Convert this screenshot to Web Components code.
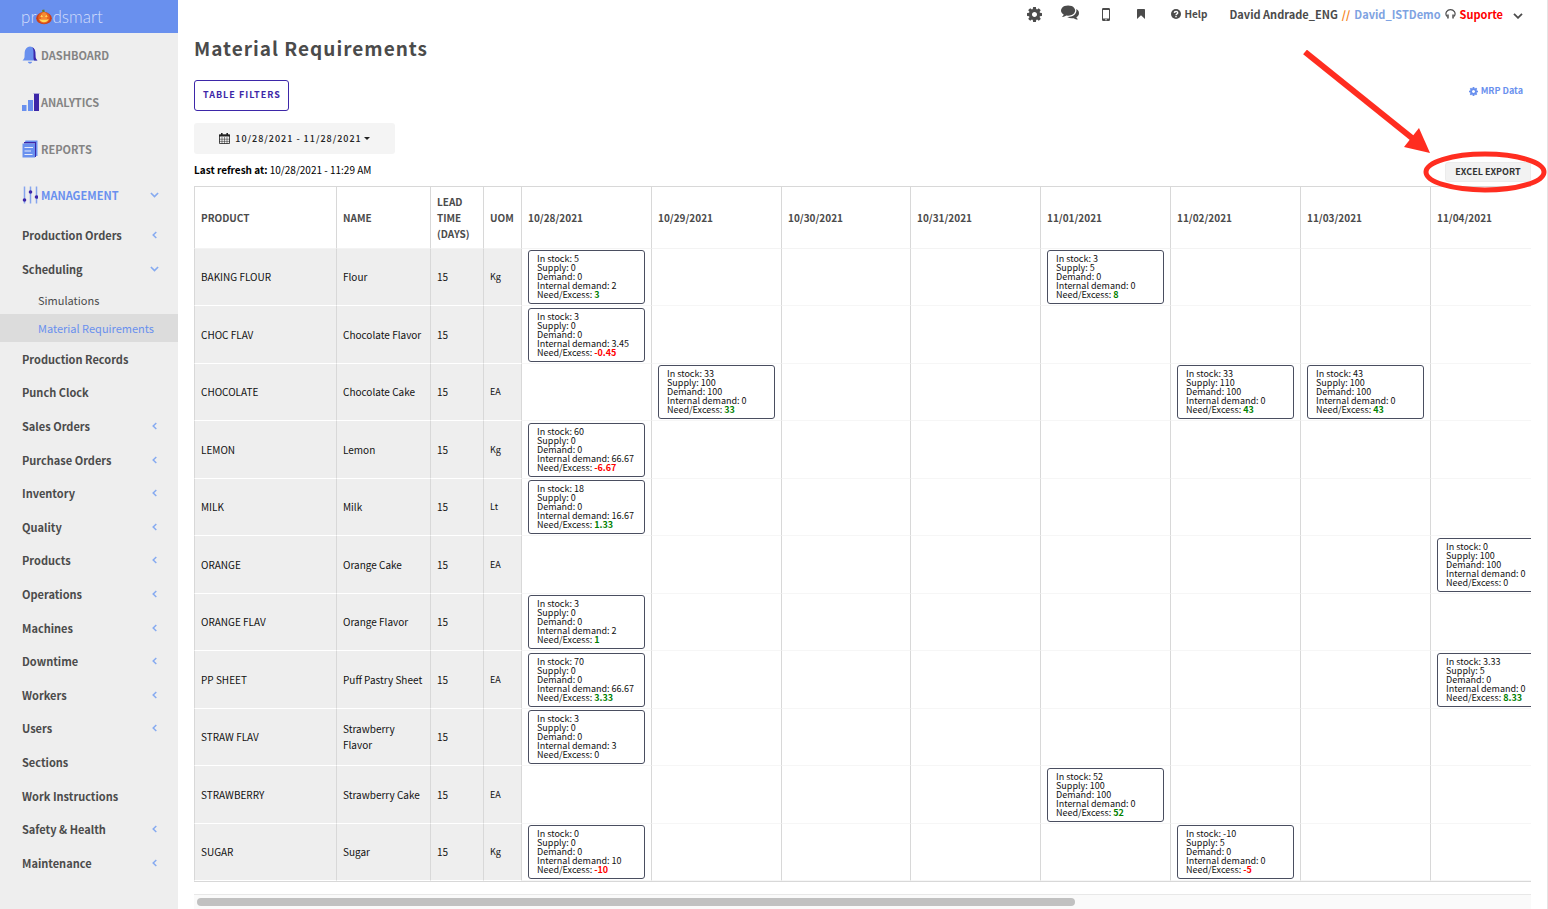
<!DOCTYPE html>
<html lang="en">
<head>
<meta charset="utf-8">
<title>Material Requirements</title>
<style>
  body { margin: 0; background: #fff; font-family: "Noto Sans CJK SC", "Noto Sans", sans-serif; font-size: 10px; line-height: 16px; color: #111; }
</style>
</head>
<body>
<app-shell>
  <side-bar slot="nav"></side-bar>
  <top-bar slot="top"></top-bar>
  <mrp-page></mrp-page>
</app-shell>

<script>
const define = (name, html, setup) => {
  const tpl = document.createElement('template');
  tpl.innerHTML = html;
  customElements.define(name, class extends HTMLElement {
    constructor() {
      super();
      this.attachShadow({ mode: 'open' }).append(tpl.content.cloneNode(true));
    }
    connectedCallback() { if (setup) setup(this, this.shadowRoot); }
  });
};

/* ---------- icons ---------- */
const ICONS = {
  bell: ['0 0 16 18', '<path fill="#6990ee" d="M8 .5c-3 .3-5 2.500-5.300 5.500L2.500 11C2.400 12.500 1.600 13.300.5 14.500h15c-1.100-1.200-1.900-2-2-3.500l-.2-5C13 3 11 .8 8 .5z"/><path fill="#3d27a8" d="M10.200 1.300c2 .9 3 2.700 3.100 4.700l.2 5c.1 1.500.9 2.300 2 3.500h-3.300c-.7-1.200-.7-2.300-.7-3.800V6c0-2-.4-3.500-1.300-4.700z"/><path fill="#6990ee" d="M5.800 15.700h4.400c-.3 1.200-1.100 1.800-2.200 1.800s-1.900-.6-2.200-1.800z"/>'],
  bars: ['0 0 18 18', '<path fill="#6990ee" d="M0 12h4.500v6H0zM6 7h5v11H6z"/><path fill="#3d27a8" d="M12 1h5v17h-5z"/><path fill="#a9a4d8" d="M11.500 0h6v1h-6z"/>'],
  doc: ['0 0 16 18', '<path fill="#6990ee" d="M3.500.5h12V16h-1.500V2H3z"/><path fill="#3d27a8" d="M2 2h12v15h-1V3.500H2z"/><path fill="#6990ee" d="M.5 3.500H13v14H.5z"/><path stroke="#e6ecfb" stroke-width="1.200" d="M2.500 7.500h8.500M2.500 11h6.500M2.500 14.500h8"/>'],
  sliders: ['0 0 16 18', '<path stroke="#86a5ee" stroke-width="1.500" d="M2.500.5v17M8.500.5v17M14.500.5v17"/><g fill="#3d27a8"><circle cx="2.500" cy="14" r="1.800"/><circle cx="8.500" cy="6" r="1.800"/><circle cx="14.500" cy="11" r="1.800"/></g>'],
  down: ['0 0 10 6', '<path fill="none" stroke="currentColor" stroke-width="1.800" d="M1 .8l4 4 4-4"/>'],
  left: ['0 0 5 8', '<path fill="none" stroke="currentColor" stroke-width="1.500" d="M4.300 1L1.200 4l3.100 3"/>'],
  cog: ['0 128 1536 1536', '<path fill="currentColor" d="M1024 896q0-106-75-181t-181-75-181 75-75 181 75 181 181 75 181-75 75-181zm512-109v222q0 12-8 23t-20 13l-185 28q-19 54-39 91 35 50 107 138 10 12 10 25t-9 23q-27 37-99 108t-94 71q-12 0-26-9l-138-108q-44 23-91 38-16 136-29 186-7 28-36 28h-222q-14 0-24.500-8.500t-11.500-21.500l-28-184q-49-16-90-37l-141 107q-10 9-25 9-14 0-25-11-126-114-165-168-7-10-7-23 0-12 8-23 15-21 51-66.500t54-70.500q-27-50-41-99l-183-27q-13-2-21-12.500t-8-23.500v-222q0-12 8-23t19-13l186-28q14-46 39-92-40-57-107-138-10-12-10-24 0-10 9-23 26-36 98.500-107.500t94.500-71.500q13 0 26 10l138 107q44-23 91-38 16-136 29-186 7-28 36-28h222q14 0 24.500 8.500t11.500 21.500l28 184q49 16 90 37l142-107q9-9 24-9 13 0 25 10 129 119 165 170 7 8 7 22 0 12-8 23-15 21-51 66.500t-54 70.500q26 50 41 98l183 28q13 2 21 12.500t8 23.500z" fill-rule="evenodd"/>'],
  chat: ['0 256 1792 1408', '<path fill="currentColor" d="M1408 768q0 139-94 257t-256.500 186.500-353.500 68.500q-86 0-176-16-124 88-278 128-36 9-86 16h-3q-11 0-20.500-8t-11.500-21q-1-3-1-6.500t.5-6.500 2-6l2.500-5 3.500-5.500 4-5 4.500-5 4-4.500q5-6 23-25t26-29.500 22.500-29 25-38.500 20.500-44q-124-72-195-177t-71-224q0-139 94-257t256.500-186.500 353.500-68.500 353.500 68.500 256.500 186.500 94 257zm384 256q0 120-71 224.500t-195 176.500q10 24 20.500 44t25 38.500 22.500 29 26 29.500 23 25q1 1 4 4.500t4.500 5 4 5 3.500 5.500l2.500 5 2 6 .5 6.500-1 6.500q-3 14-13 22t-22 7q-50-7-86-16-154-40-278-128-90 16-176 16-271 0-472-132 58 4 88 4 161 0 309-45t264-129q125-92 192-212t67-254q0-77-23-152 129 71 204 178t75 230z"/>'],
  phone: ['0 0 8 13', '<path fill="currentColor" fill-rule="evenodd" d="M1.300 0h5.400Q8 0 8 1.300v10.400Q8 13 6.700 13H1.300Q0 13 0 11.700V1.300Q0 0 1.300 0zM1 2v8.500h6V2zM4 11.100a.7.7 0 100 1.400.7.7 0 000-1.400z"/>'],
  bookmark: ['0 0 8 10', '<path fill="currentColor" d="M.8 0h6.400Q8 0 8 .8V10L4 6.300 0 10V.8Q0 0 .8 0z"/>'],
  help: ['0 0 10 10', '<circle cx="5" cy="5" r="5" fill="currentColor"/><path fill="none" stroke="#fff" stroke-width="1.400" d="M3.300 3.900c.1-2 3.500-1.900 3.400 0C6.700 5 5 4.900 5 6.300"/><path fill="#fff" d="M4.300 7h1.400v1.300H4.300z"/>'],
  headset: ['0 0 11 10', '<path fill="none" stroke="currentColor" stroke-width="1.200" d="M1.900 7.500C-.7 3.500 2.500.7 5.500.7s6.200 2.800 3.600 6.800"/><path fill="currentColor" d="M2.200 5.500h1.500v4H2.200zM7.300 5.500h1.500v4H7.300z"/>'],
  calendar: ['0 0 11 11', '<path fill="none" stroke="currentColor" stroke-width=".8" d="M.5 2h10v8.500H.5z"/><path fill="currentColor" d="M0 1.600h11v1.900H0zM2 0h1.600v3H2zM7.400 0H9v3H7.400z"/><path stroke="currentColor" stroke-width=".5" d="M3 4v7M5.500 4v7M8 4v7M0 6.200h11M0 8.400h11"/>'],
  caret: ['0 0 6 3', '<path fill="currentColor" d="M0 0h6L3 3z"/>'],
  pumpkin: ['0 0 17 17', '<path fill="#6b7a2a" d="M7 4l-.6-3 2.400-.5.7 3.500z"/><ellipse cx="8.500" cy="9.800" rx="8.300" ry="6.500" fill="#c9401b"/><ellipse cx="8.500" cy="9.300" rx="6.200" ry="6" fill="#e8641f"/><ellipse cx="8.500" cy="8.800" rx="3.300" ry="5.300" fill="#f58a35"/><path fill="#ffd75a" d="M4.500 8.500l1.500-2.300 1.500 2.300zM9.500 8.500L11 6.200l1.500 2.300zM3.500 10.500q5 2 10 0-1.500 3.500-5 3.500t-5-3.500z"/>']
};
customElements.define('ui-icon', class extends HTMLElement {
  constructor() { super(); this.attachShadow({ mode: 'open' }); }
  connectedCallback() {
    const [box, art] = ICONS[this.getAttribute('name')];
    const [w, h] = [this.getAttribute('w'), this.getAttribute('h')];
    this.shadowRoot.innerHTML = `<style>:host{display:inline-block;flex:none;line-height:0}svg{display:block}</style>
      <svg width="${w}" height="${h}" viewBox="${box}" aria-hidden="true">${art}</svg>`;
  }
});

/* ---------- shell ---------- */
define('app-shell', `<style>
  :host { display: grid; grid-template-columns: 178px minmax(0, 1fr); min-height: 100vh; }
  .body { border-right: 1px solid #e4e4e4; padding: 0 16px; }
</style>
<slot name="nav"></slot>
<div class="body"><slot name="top"></slot><main><slot></slot></main></div>`);

/* ---------- sidebar ---------- */
define('nav-item', `<style>
  :host { display: block; height: 34px; }
  a { display: flex; align-items: center; height: 100%; box-sizing: border-box; padding: 0 19px 0 22px;
      color: #4b4b4b; font-weight: 700; font-size: 11px; text-decoration: none; white-space: nowrap; }
  .label { flex: 1; }
  .arrow { display: flex; justify-content: center; width: 10px; }
  ui-icon { color: #86aaf0; }
  .lead { display: none; margin-right: 3px; width: 16px; }
  :host([kind=main]) { height: 47px; }
  :host([kind=main]) a { color: #848484; padding-bottom: 3px; }
  :host([kind=main]) .lead { display: flex; }
  :host([kind=main][current]) { height: 44px; }
  :host([kind=main][current]) a, :host([kind=sub][current]) a { color: #6990ee; }
  :host([kind=sub]) { height: 28px; }
  :host([kind=sub]) a { padding-left: 38px; padding-right: 0; font-weight: 400; }
  :host([kind=sub][current]) { background: #dcdcdc; }
</style>
<a href="#"><span class="lead"></span><span class="label"><slot></slot></span><span class="arrow"></span></a>`, (el, root) => {
  const icon = el.getAttribute('icon'), arrow = el.getAttribute('arrow');
  if (icon) root.querySelector('.lead').innerHTML = `<ui-icon name="${icon}" w="${icon === 'bars' ? 18 : 16}" h="18"></ui-icon>`;
  if (arrow) root.querySelector('.arrow').innerHTML = arrow === 'left'
    ? '<ui-icon name="left" w="5" h="8"></ui-icon>' : '<ui-icon name="down" w="9" h="6"></ui-icon>';
});

define('side-bar', `<style>
  :host { display: block; background: #eee; }
  .logo { display: flex; align-items: center; height: 33px; padding-left: 21px; box-sizing: border-box; background: #6990ee;
          color: #d3defb; font: 300 17px/20px Lato, sans-serif; text-decoration: none; }
</style>
<a class="logo" href="#" aria-label="prodsmart"><span>pr</span><ui-icon name="pumpkin" w="16" h="16"></ui-icon><span>dsmart</span></a>
<nav>
  <nav-item kind="main" icon="bell">DASHBOARD</nav-item>
  <nav-item kind="main" icon="bars">ANALYTICS</nav-item>
  <nav-item kind="main" icon="doc">REPORTS</nav-item>
  <nav-item kind="main" icon="sliders" arrow="down" current>MANAGEMENT</nav-item>
  <nav-item arrow="left">Production Orders</nav-item>
  <nav-item arrow="down">Scheduling</nav-item>
  <nav-item kind="sub">Simulations</nav-item>
  <nav-item kind="sub" current>Material Requirements</nav-item>
  <side-list></side-list>
</nav>`);

define('side-list', `<style>
  :host { display: block; }
  nav-item:nth-of-type(5n+1), nav-item:nth-of-type(5n+4) { height: 33px; }
</style>
<nav-item>Production Records</nav-item>
<nav-item>Punch Clock</nav-item>
<nav-item arrow="left">Sales Orders</nav-item>
<nav-item arrow="left">Purchase Orders</nav-item>
<nav-item arrow="left">Inventory</nav-item>
<nav-item arrow="left">Quality</nav-item>
<nav-item arrow="left">Products</nav-item>
<nav-item arrow="left">Operations</nav-item>
<nav-item arrow="left">Machines</nav-item>
<nav-item arrow="left">Downtime</nav-item>
<nav-item arrow="left">Workers</nav-item>
<nav-item arrow="left">Users</nav-item>
<nav-item>Sections</nav-item>
<nav-item>Work Instructions</nav-item>
<nav-item arrow="left">Safety &amp; Health</nav-item>
<nav-item arrow="left">Maintenance</nav-item>`);

/* ---------- top bar ---------- */
define('top-bar', `<style>
  :host { display: flex; justify-content: flex-end; align-items: center; height: 28px; padding-right: 8px; color: #4b4b4b; font-weight: 700; white-space: nowrap; }
  .tools { display: flex; align-items: center; margin-right: 22px; }
  a { color: inherit; text-decoration: none; display: flex; align-items: center; }
  .chat { margin: 0 23px 4px 19px; }
  .mark { margin: 0 26px 0 27px; }
  .help { gap: 3px; }
  .user { gap: 4px; font-size: 11px; }
  .org { color: #7ea3e2; } .sep { color: #f58220; } .sup { color: #f00; }
  button { all: unset; display: flex; margin: 3px 0 0 10px; cursor: pointer; }
</style>
<div class="tools">
  <a href="#" aria-label="Settings"><ui-icon name="cog" w="15" h="15"></ui-icon></a>
  <a href="#" aria-label="Messages" class="chat"><ui-icon name="chat" w="18" h="15"></ui-icon></a>
  <a href="#" aria-label="Mobile"><ui-icon name="phone" w="8" h="13"></ui-icon></a>
  <a href="#" aria-label="Bookmarks" class="mark"><ui-icon name="bookmark" w="8" h="10"></ui-icon></a>
  <a href="#" class="help"><ui-icon name="help" w="10" h="10"></ui-icon>Help</a>
</div>
<a href="#" class="user"><span>David Andrade_ENG</span><span class="sep">//</span><span class="org">David_ISTDemo</span><ui-icon name="headset" w="11" h="10"></ui-icon><span class="sup">Suporte</span></a>
<button aria-label="Account menu"><ui-icon name="down" w="10" h="6"></ui-icon></button>`);

/* ---------- stock card ---------- */
define('stock-card', `<style>
  :host { display: block; box-sizing: border-box; height: 54px; border: 1px solid #4a4e60; border-radius: 3px; background: #fff;
          padding: 3px 0 0 8px; font-size: 9px; line-height: 9px; color: #111; white-space: nowrap; }
  div { height: 9px; }
  .plus { color: #008000; font-weight: 700; } .minus { color: #f00; font-weight: 700; }
</style>`, (el, root) => {
  const v = el.getAttribute('values').split(' ');
  const n = +v[4], cls = n > 0 ? 'plus' : n < 0 ? 'minus' : '';
  ['In stock', 'Supply', 'Demand', 'Internal demand', 'Need/Excess'].forEach((label, i) => {
    const row = document.createElement('div');
    row.innerHTML = i === 4 && cls ? `${label}: <span class="${cls}">${v[i]}</span>` : `${label}: ${v[i]}`;
    root.append(row);
  });
});

/* ---------- requirements table ---------- */
const DATES = ['10/28/2021', '10/29/2021', '10/30/2021', '10/31/2021', '11/01/2021', '11/02/2021', '11/03/2021', '11/04/2021'];
const ROWS = [
  ['BAKING FLOUR', 'Flour', 'Kg', { 0: '5 0 0 2 3', 4: '3 5 0 0 8' }],
  ['CHOC FLAV', 'Chocolate Flavor', '', { 0: '3 0 0 3.45 -0.45' }],
  ['CHOCOLATE', 'Chocolate Cake', 'EA', { 1: '33 100 100 0 33', 5: '33 110 100 0 43', 6: '43 100 100 0 43' }],
  ['LEMON', 'Lemon', 'Kg', { 0: '60 0 0 66.67 -6.67' }],
  ['MILK', 'Milk', 'Lt', { 0: '18 0 0 16.67 1.33' }],
  ['ORANGE', 'Orange Cake', 'EA', { 7: '0 100 100 0 0' }],
  ['ORANGE FLAV', 'Orange Flavor', '', { 0: '3 0 0 2 1' }],
  ['PP SHEET', 'Puff Pastry Sheet', 'EA', { 0: '70 0 0 66.67 3.33', 7: '3.33 5 0 0 8.33' }],
  ['STRAW FLAV', 'Strawberry Flavor', '', { 0: '3 0 0 3 0' }],
  ['STRAWBERRY', 'Strawberry Cake', 'EA', { 4: '52 100 100 0 52' }],
  ['SUGAR', 'Sugar', 'Kg', { 0: '0 0 0 10 -10', 5: '-10 5 0 0 -5' }]
];
define('mrp-table', `<style>
  :host { display: block; }
  .view { overflow: hidden; }
  table { table-layout: fixed; width: 1367px; border-collapse: separate; border-spacing: 0; }
  .c1 { width: 143px; } .c2 { width: 94px; } .c3 { width: 53px; } .c4 { width: 38px; } .cd { width: 130px; } .cd:nth-child(7) { width: 129px; }
  th, td { box-sizing: border-box; text-align: left; padding: 0 6px; border-right: 1px solid #d8d8d8; }
  th:first-child, td:first-child { border-left: 1px solid #d8d8d8; }
  th { height: 63px; color: #4b4b4b; border-top: 1px solid #d8d8d8; border-bottom: 1px solid #f3f3f3; }
  td { height: 57px; border-bottom: 1px solid #f6f6f6; }
  tr:nth-child(even) td { height: 58px; }
  td.fix { background: #eee; border-bottom-color: #fff; }
  td.uom { font-size: 9px; }
  td.day { vertical-align: bottom; padding-bottom: 1px; }
  .end { border-top: 1px solid #d8d8d8; height: 12px; }
  .track { border: 1px solid #e8e8e8; border-width: 1px 0; background: #fafafa; padding: 3px; height: 8px; }
  .thumb { width: 66%; height: 8px; border-radius: 4px; background: #c1c1c1; }
</style>
<div class="view"><table>
  <colgroup><col class="c1"><col class="c2"><col class="c3"><col class="c4"></colgroup>
  <thead><tr><th scope="col">PRODUCT</th><th scope="col">NAME</th><th scope="col">LEAD TIME (DAYS)</th><th scope="col">UOM</th></tr></thead>
  <tbody></tbody>
</table></div>
<div class="end"></div>
<div class="track"><div class="thumb"></div></div>`, (el, root) => {
  const cols = root.querySelector('colgroup'), head = root.querySelector('thead tr');
  cols.insertAdjacentHTML('beforeend', DATES.map(() => '<col class="cd">').join(''));
  head.insertAdjacentHTML('beforeend', DATES.map(d => `<th scope="col">${d}</th>`).join(''));
  root.querySelector('tbody').innerHTML = ROWS.map(([code, name, uom, cards]) =>
    `<tr><td class="fix">${code}</td><td class="fix">${name}</td><td class="fix">15</td><td class="fix uom">${uom}</td>` +
    DATES.map((_, i) => `<td class="day">${cards[i] ? `<stock-card values="${cards[i]}"></stock-card>` : ''}</td>`).join('') + '</tr>').join('');
});

/* ---------- callout: arrow and ring drawn over the export button ---------- */
define('export-callout', `<style>
  :host { position: absolute; right: -16px; bottom: -12px; width: 244px; height: 144px; pointer-events: none; }
  svg { display: block; }
</style>
<svg width="244" height="144" aria-hidden="true">
  <path d="M2 2L114 92" stroke="#ff2d20" stroke-width="6"/>
  <path d="M127 103L116 78L101 97z" fill="#ff2d20"/>
  <ellipse cx="182" cy="122" rx="59" ry="18" fill="none" stroke="#ff2d20" stroke-width="5"/>
</svg>`);

/* ---------- page ---------- */
define('mrp-page', `<style>
  :host { display: block; }
  h1 { margin: 4px 0 16px; font-size: 19px; line-height: 32px; font-weight: 700; letter-spacing: 1px; color: #4b4b4b; }
  .row { display: flex; justify-content: space-between; align-items: flex-start; }
  button { font: inherit; cursor: pointer; box-sizing: border-box; white-space: nowrap; }
  .filters { height: 31px; padding: 0 7px 2px 8px; border: 1px solid #3d27a8; border-radius: 3px; background: #fff; color: #3d27a8; font-weight: 700; font-size: 9px; letter-spacing: 1px; }
  .data { display: flex; align-items: center; gap: 3px; padding-right: 8px; line-height: 22px; font-size: 9px; font-weight: 700; color: #6990ee; text-decoration: none; }
  .range { display: flex; align-items: center; justify-content: center; width: 201px; height: 31px; margin: 12px 0 8px; border: 0; border-radius: 3px; background: #f4f4f4; color: #222; font-weight: 500; font-size: 9px; letter-spacing: 1px; }
  .range span { margin: 0 2px 0 5px; }
  .status { position: relative; height: 20px; margin-bottom: 4px; color: #000; }
  .export { height: 20px; width: 86px; padding: 0; border: 1px solid #ececec; border-radius: 3px; background: #f2f2f2; color: #333; font-weight: 700; font-size: 9px; line-height: 18px; }
</style>
<h1>Material Requirements</h1>
<div class="row">
  <button class="filters">TABLE FILTERS</button>
  <a class="data" href="#"><ui-icon name="cog" w="9" h="9"></ui-icon>MRP Data</a>
</div>
<button class="range"><ui-icon name="calendar" w="11" h="11"></ui-icon><span>10/28/2021 - 11/28/2021</span><ui-icon name="caret" w="6" h="3"></ui-icon></button>
<div class="row status">
  <div><b>Last refresh at:</b> 10/28/2021 - 11:29 AM</div>
  <button class="export">EXCEL EXPORT</button>
  <export-callout></export-callout>
</div>
<mrp-table></mrp-table>`);
</script>
</body>
</html>
